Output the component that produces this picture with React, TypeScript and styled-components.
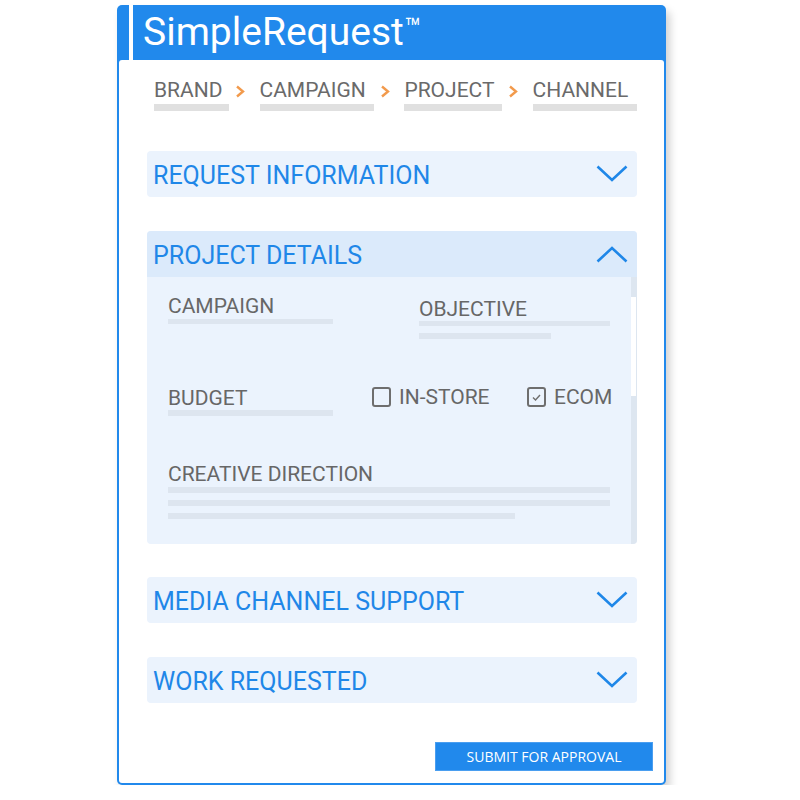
import styled, { createGlobalStyle } from "styled-components";

const GlobalStyle = createGlobalStyle`
  body {
    margin: 0;
    background: #ffffff;
    font-family: Roboto, "Liberation Sans", sans-serif;
  }
`;

const Page = styled.div`
  padding: 5px 0 0 117px;
`;

const Card = styled.div`
  width: 549px;
  background: #2189ec;
  border-radius: 5px;
  padding: 0 2px 2px;
  box-sizing: border-box;
  box-shadow: 4px 6px 8px rgba(0, 0, 0, 0.18);
`;

const Header = styled.div`
  display: flex;
  height: 55px;
  align-items: stretch;
  margin: 0 -2px;
`;

const Flag = styled.div`
  width: 12px;
`;

const Stripe = styled.div`
  width: 4px;
  background: #ffffff;
`;

const Title = styled.h1`
  margin: 0;
  padding-left: 10px;
  font-size: 39px;
  font-weight: 400;
  line-height: 54px;
  color: #ffffff;
`;

const Tm = styled.span`
  font-size: 27px;
  vertical-align: top;
  line-height: 46px;
  margin-left: 1px;
`;

const Body = styled.div`
  background: #ffffff;
  border-radius: 3px;
  padding: 18px 27px 12px 28px;
  display: flex;
  flex-direction: column;
`;

const Crumbs = styled.div`
  display: flex;
  padding-left: 7px;
`;

const Crumb = styled.div<{ $w: number }>`
  width: ${(p) => p.$w}px;
  display: flex;
  flex-direction: column;
`;

const CrumbText = styled.span`
  font-size: 21px;
  line-height: 24px;
  color: #6a6a6a;
`;

const CrumbBar = styled.div`
  height: 7px;
  margin-top: 2px;
  background: #e0e0e0;
`;

const Sep = styled.div`
  width: 31px;
  padding: 5px 0 0 6px;
  box-sizing: border-box;
`;

const Section = styled.div<{ $mt: number }>`
  margin-top: ${(p) => p.$mt}px;
  background: #ebf3fd;
  border-radius: 4px;
  overflow: hidden;
`;

const SectionHead = styled.div<{ $open?: boolean }>`
  height: 46px;
  display: flex;
  align-items: center;
  justify-content: space-between;
  padding: 0 9px 0 6px;
  background: ${(p) => (p.$open ? "#dbeafb" : "#ebf3fd")};
`;

const SectionTitle = styled.span`
  font-size: 25px;
  color: #1f87e8;
  padding-top: 3px;
`;

const DetailBody = styled.div`
  display: flex;
  height: 267px;
`;

const Fields = styled.div`
  flex: 1;
  padding: 17px 19px 0 21px;
  display: flex;
  flex-direction: column;
`;

const Row = styled.div<{ $mt?: number }>`
  display: flex;
  align-items: flex-start;
  margin-top: ${(p) => p.$mt ?? 0}px;
`;

const Col = styled.div<{ $w?: number; $mt?: number }>`
  display: flex;
  flex-direction: column;
  width: ${(p) => (p.$w ? `${p.$w}px` : "auto")};
  flex: ${(p) => (p.$w ? "none" : 1)};
  margin-top: ${(p) => p.$mt ?? 0}px;
`;

const Label = styled.span`
  font-size: 21px;
  line-height: 24px;
  color: #676767;
`;

const Bar = styled.div<{ $w: number; $h?: number; $mt?: number }>`
  width: ${(p) => p.$w}px;
  height: ${(p) => p.$h ?? 6}px;
  margin-top: ${(p) => p.$mt ?? 0}px;
  background: #dde5ef;
`;

const Check = styled.div`
  display: flex;
  align-items: center;
  gap: 8px;
`;

const Box = styled.div`
  width: 15px;
  height: 16px;
  border: 2px solid #6e6e6e;
  border-radius: 3px;
  display: flex;
  align-items: center;
  justify-content: center;
`;

const Track = styled.div`
  width: 7px;
  background: #dde6f0;
  padding-top: 20px;
  box-sizing: border-box;
`;

const Thumb = styled.div`
  width: 5px;
  height: 99px;
  background: #ffffff;
`;

const Footer = styled.div`
  display: flex;
  justify-content: flex-end;
  margin: 39px -16px 0 0;
`;

const Submit = styled.button`
  width: 218px;
  height: 29px;
  border: 1px solid #4a9ef0;
  background: #2189ec;
  color: #ffffff;
  font-family: "Open Sans", sans-serif;
  font-size: 14px;
  padding: 0;
  cursor: pointer;
`;

function Chevron({ up }: { up?: boolean }) {
  return (
    <svg width="32" height="18" viewBox="0 0 32 18">
      <polyline
        points={up ? "1.5,16.5 16,3 30.5,16.5" : "1.5,1.5 16,15 30.5,1.5"}
        fill="none"
        stroke="#1f87e8"
        strokeWidth="2.6"
      />
    </svg>
  );
}

function Arrow() {
  return (
    <svg width="10" height="13" viewBox="0 0 10 13">
      <polyline points="2,1.5 8,6.5 2,11.5" fill="none" stroke="#f29a4c" strokeWidth="2.4" />
    </svg>
  );
}

const crumbs = [
  { name: "BRAND", w: 76 },
  { name: "CAMPAIGN", w: 116 },
  { name: "PROJECT", w: 99 },
  { name: "CHANNEL", w: 106 },
];

function App() {
  return (
    <Page>
      <GlobalStyle />
      <Card>
        <Header>
          <Flag />
          <Stripe />
          <Title>
            SimpleRequest<Tm>™</Tm>
          </Title>
        </Header>
        <Body>
          <Crumbs>
            {crumbs.map((c, i) => (
              <>
                <Crumb key={c.name} $w={c.w}>
                  <CrumbText>{c.name}</CrumbText>
                  <CrumbBar />
                </Crumb>
                {i < crumbs.length - 1 && (
                  <Sep key={c.name + "-sep"}>
                    <Arrow />
                  </Sep>
                )}
              </>
            ))}
          </Crumbs>

          <Section $mt={40}>
            <SectionHead>
              <SectionTitle>REQUEST INFORMATION</SectionTitle>
              <Chevron />
            </SectionHead>
          </Section>

          <Section $mt={34}>
            <SectionHead $open>
              <SectionTitle>PROJECT DETAILS</SectionTitle>
              <Chevron up />
            </SectionHead>
            <DetailBody>
              <Fields>
                <Row>
                  <Col $w={251}>
                    <Label>CAMPAIGN</Label>
                    <Bar $w={165} $h={5} $mt={1} />
                  </Col>
                  <Col $mt={3}>
                    <Label>OBJECTIVE</Label>
                    <Bar $w={191} $h={5} $mt={0} />
                    <Bar $w={132} $mt={7} />
                  </Col>
                </Row>
                <Row $mt={47}>
                  <Col $w={204}>
                    <Label>BUDGET</Label>
                    <Bar $w={165} />
                  </Col>
                  <Col $w={155} $mt={-1}>
                    <Check>
                      <Box />
                      <Label>IN-STORE</Label>
                    </Check>
                  </Col>
                  <Col $mt={-1}>
                    <Check>
                      <Box>
                        <svg width="9" height="7" viewBox="0 0 9 7">
                          <polyline points="1,3.5 3.5,6 8,1" fill="none" stroke="#6e6e6e" strokeWidth="1.4" />
                        </svg>
                      </Box>
                      <Label>ECOM</Label>
                    </Check>
                  </Col>
                </Row>
                <Row $mt={46}>
                  <Col>
                    <Label>CREATIVE DIRECTION</Label>
                    <Bar $w={442} $mt={1} />
                    <Bar $w={442} $mt={7} />
                    <Bar $w={347} $mt={7} />
                  </Col>
                </Row>
              </Fields>
              <Track>
                <Thumb />
              </Track>
            </DetailBody>
          </Section>

          <Section $mt={33}>
            <SectionHead>
              <SectionTitle>MEDIA CHANNEL SUPPORT</SectionTitle>
              <Chevron />
            </SectionHead>
          </Section>

          <Section $mt={34}>
            <SectionHead>
              <SectionTitle>WORK REQUESTED</SectionTitle>
              <Chevron />
            </SectionHead>
          </Section>

          <Footer>
            <Submit>SUBMIT FOR APPROVAL</Submit>
          </Footer>
        </Body>
      </Card>
    </Page>
  );
}

export default App;
